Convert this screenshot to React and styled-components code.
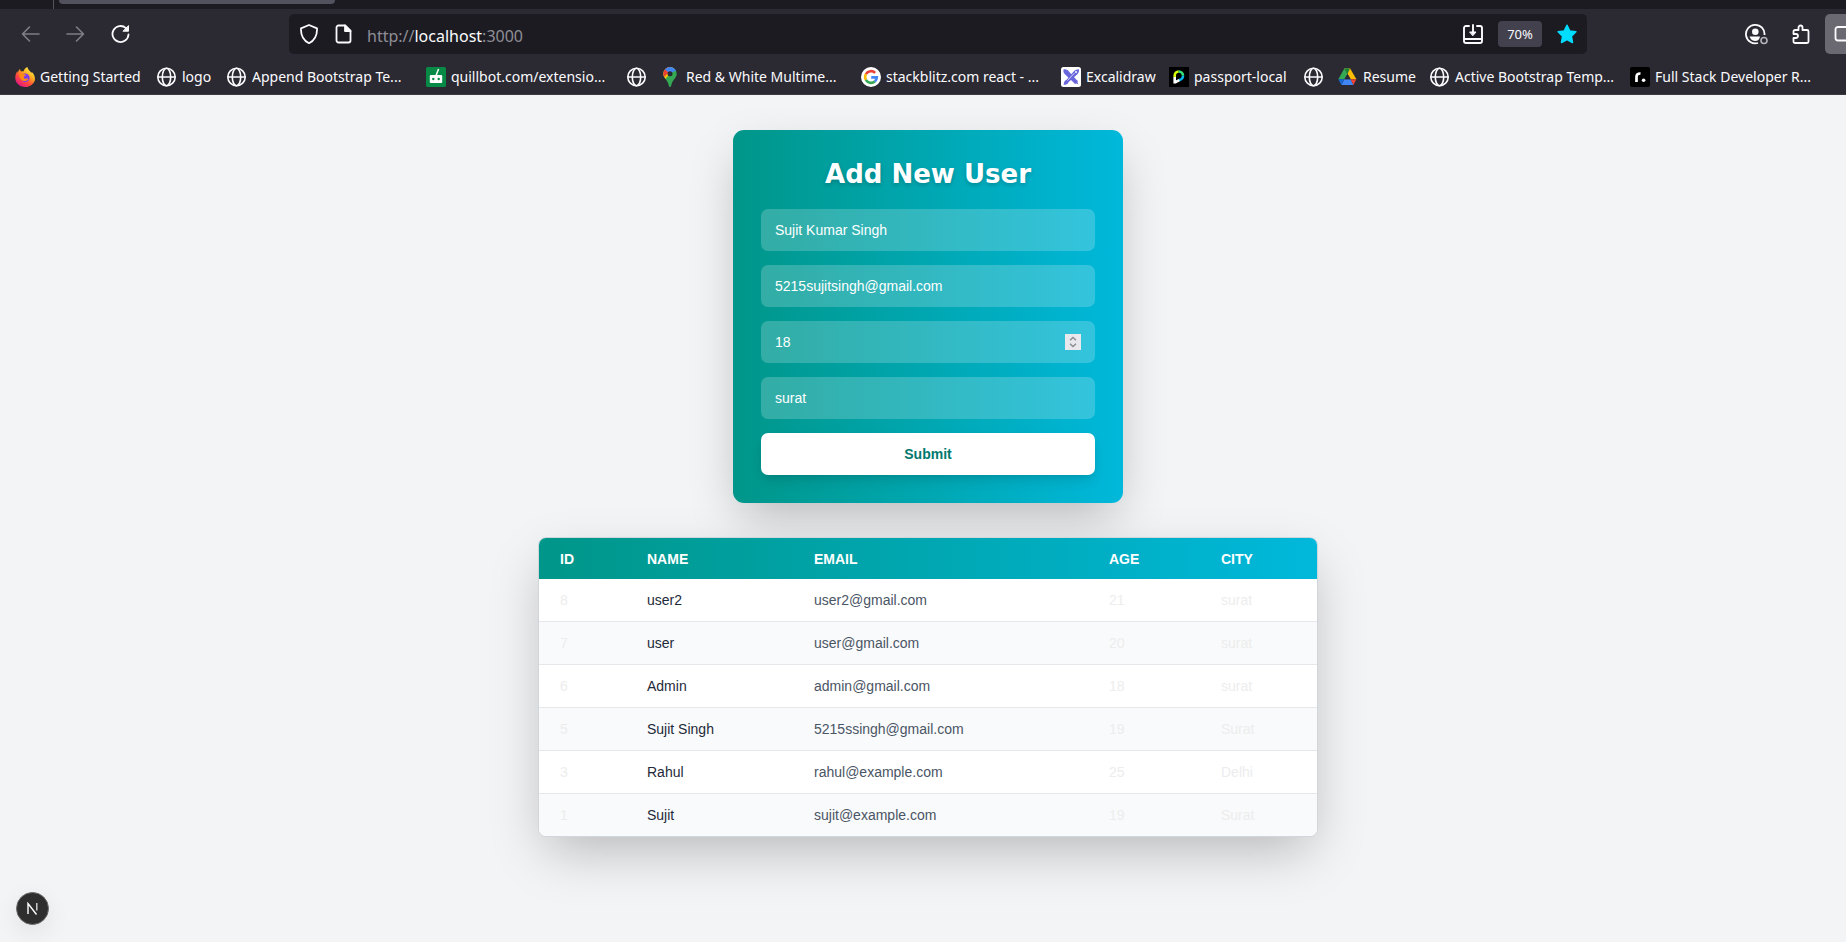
import React from "react";
import styled, { createGlobalStyle, css } from "styled-components";

const GlobalStyle = createGlobalStyle`
  *, *::before, *::after { box-sizing: border-box; }
  body {
    margin: 0;
    background: #f3f4f6;
    font-family: "Liberation Sans", Arial, Helvetica, sans-serif;
    overflow-x: hidden;
  }
  button, input { font: inherit; }
`;

const uiFont = css`
  font-family: "Segoe UI", "Noto Sans", "Open Sans", sans-serif;
`;

const Shell = styled.div`
  min-height: 100vh;
  display: flex;
  flex-direction: column;
`;

/* ---------- browser chrome ---------- */

const Chrome = styled.header`
  ${uiFont}
  background: #2b2a33;
  color: #fbfbfe;
  border-bottom: 1px solid #3b3a42;
  overflow: hidden;
`;

const TabStrip = styled.div`
  display: flex;
  align-items: flex-start;
  height: 9px;
  background: #1c1b22;
`;

const StripStart = styled.div`
  width: 54px;
  height: 9px;
  margin-right: 5px;
  border-right: 1px solid #55545e;
`;

const ActiveTab = styled.div`
  width: 276px;
  height: 4px;
  background: #52525e;
  border-radius: 0 0 4px 4px;
`;

const NavBar = styled.div`
  display: flex;
  align-items: center;
  height: 50px;
  padding-left: 8px;
`;

const NavGroup = styled.div`
  display: flex;
  align-items: center;
`;

const NavButton = styled.button`
  display: flex;
  align-items: center;
  justify-content: center;
  width: 45px;
  height: 40px;
  padding: 0;
  border: 0;
  background: none;
  color: ${(p) => (p.disabled ? "#7f7e86" : "#fbfbfe")};
`;

const EdgeButton = styled(NavButton)`
  justify-content: flex-start;
  width: 21px;
  margin-left: 2px;
  padding-left: 9px;
  border-radius: 5px 0 0 5px;
  background: #6a6972;
`;

const AddressBar = styled.div`
  flex: 1;
  min-width: 0;
  display: flex;
  align-items: center;
  height: 40px;
  margin: 0 146px;
  padding: 0 10px;
  border-radius: 5px;
  background: #1c1b22;
`;

const AddressText = styled.div`
  flex: 1;
  min-width: 0;
  margin-left: 13px;
  padding-top: 3px;
  font-size: 16px;
  line-height: 24px;
  white-space: nowrap;
  overflow: hidden;
  color: #8f8e96;
`;

const Host = styled.span`
  color: #fbfbfe;
`;

const BarIcon = styled.button`
  display: flex;
  align-items: center;
  justify-content: center;
  width: 20px;
  height: 24px;
  padding: 0;
  border: 0;
  background: none;
  color: #fbfbfe;
`;

const PageInfo = styled(BarIcon)`
  margin-left: 15px;
`;

const ZoomLevel = styled.button`
  width: 44px;
  height: 26px;
  margin: 0 15px;
  padding: 0;
  border: 0;
  border-radius: 4px;
  background: #42414d;
  color: #fbfbfe;
  font-size: 13px;
  line-height: 26px;
`;

const Bookmarks = styled.nav`
  display: flex;
  align-items: center;
  height: 35px;
  padding: 1px 0 0 15px;
`;

const Bookmark = styled.a`
  flex: none;
  display: flex;
  align-items: center;
  gap: 5px;
  width: ${(p) => p.$width}px;
  font-size: 14px;
  line-height: 20px;
  color: #fbfbfe;
  text-decoration: none;
  white-space: nowrap;
`;

/* ---------- page ---------- */

const brandGradient = css`
  background: linear-gradient(to right in oklab, #009689, #00b8db);
`;

const liftedShadow = css`
  box-shadow: 0 20px 50px -8px rgba(0, 0, 0, 0.25);
`;

const Main = styled.main`
  flex: 1;
  display: flex;
  flex-direction: column;
  align-items: center;
  gap: 34px;
  padding: 35px 0 35px 10px;
`;

const UserForm = styled.form`
  ${brandGradient}
  ${liftedShadow}
  display: flex;
  flex-direction: column;
  gap: 14px;
  width: 100%;
  max-width: 390px;
  padding: 28px;
  border-radius: 11px;
`;

const Title = styled.h1`
  margin: 0 0 4px;
  font-family: "Arial Black", "DejaVu Sans", sans-serif;
  font-size: 26px;
  font-weight: 900;
  line-height: 33px;
  text-align: center;
  color: #fff;
  text-shadow: 0 2px 4px rgba(0, 0, 0, 0.2);
`;

const Field = styled.div`
  display: flex;
  align-items: center;
  height: 42px;
  padding: 0 14px;
  border-radius: 7px;
  background: rgba(255, 255, 255, 0.2);
`;

const FieldInput = styled.input`
  flex: 1;
  min-width: 0;
  height: 42px;
  padding: 0;
  border: 0;
  outline: 0;
  background: none;
  color: #fff;
  font-size: 14px;
  appearance: textfield;
  &::-webkit-inner-spin-button { appearance: none; margin: 0; }
`;

const Stepper = styled.button`
  display: flex;
  width: 16px;
  height: 16px;
  padding: 0;
  border: 0;
  background: #e9e9ed;
  color: #8b8b94;
`;

const Submit = styled.button`
  height: 42px;
  border: 0;
  border-radius: 7px;
  background: #fff;
  color: #00786f;
  font-size: 14px;
  font-weight: 700;
  box-shadow: 0 7px 14px -2px rgba(0, 0, 0, 0.12), 0 3px 6px -3px rgba(0, 0, 0, 0.1);
`;

const TableCard = styled.div`
  ${liftedShadow}
  width: 100%;
  max-width: 780px;
  overflow: hidden;
  border: 1px solid #d1d5dc;
  border-radius: 8px;
  background: #fff;
`;

const UserTable = styled.table`
  width: 100%;
  border-collapse: separate;
  border-spacing: 0;
  table-layout: fixed;
  font-size: 14px;
  line-height: 20px;
  text-align: left;
`;

const HeadRow = styled.tr`
  ${brandGradient}
  height: 41px;
`;

const HeadCell = styled.th`
  width: ${(p) => p.$width};
  padding: 0 21px;
  font-weight: 700;
  text-transform: uppercase;
  color: #fff;
`;

const Cell = styled.td`
  height: 43px;
  padding: 0 21px;
  border-bottom: 1px solid #e5e7eb;
  color: ${(p) => p.$color || "#ededed"};
`;

const Row = styled.tr`
  &:nth-child(even) { background: #f9fafb; }
  &:last-child ${Cell} { height: 42px; border-bottom: 0; }
`;

const DevBadge = styled.button`
  position: fixed;
  left: 16px;
  bottom: 17px;
  display: flex;
  align-items: center;
  justify-content: center;
  width: 33px;
  height: 33px;
  padding: 0;
  border: 1px solid #6b6b6b;
  border-radius: 50%;
  background: #2e2e2e;
  box-shadow: 0 8px 24px rgba(0, 0, 0, 0.08);
`;

/* ---------- icons ---------- */

const Line = ({ size = 20, width = 1.6, children }) => (
  <svg width={size} height={size} viewBox="0 0 20 20" fill="none" stroke="currentColor" strokeWidth={width} strokeLinecap="round" strokeLinejoin="round" aria-hidden="true">
    {children}
  </svg>
);

const Globe = () => (
  <Line>
    <circle cx="9.500" cy="10" r="8.700" />
    <ellipse cx="9.500" cy="10" rx="4.200" ry="8.700" />
    <path d="M1 10h17" />
  </Line>
);

const Firefox = () => (
  <svg width="20" height="20" viewBox="0 0 20 20" aria-hidden="true">
    <defs>
      <linearGradient id="fxBody" x1="0.85" y1="0.05" x2="0.2" y2="0.95">
        <stop offset="0" stopColor="#fff44f" />
        <stop offset="0.35" stopColor="#ffb01f" />
        <stop offset="0.65" stopColor="#ff4b3a" />
        <stop offset="1" stopColor="#e31587" />
      </linearGradient>
    </defs>
    <path fill="url(#fxBody)" d="M12.4 0c.3 2 1.300 2.800 2.600 4.200.6.600 1.200 1.300 1.500 1.900.2-.4.200-.9.100-1.300 2.100 2 3.400 4.500 3.400 7.100C19.600 16.500 15.300 20 10.100 20 4.500 20 .3 16 .3 10.800c0-2.500.7-4.800 2-6.600.1.700.3 1.200.6 1.600.2-1.500 1-2.900 2.200-3.800 0 1 .2 1.800.8 2.400.9-.2 1.800-.1 2.600.2C8.800 2.800 10.300.9 12.400 0z" />
    <circle cx="10.300" cy="10.800" r="4.300" fill="#7a3cf0" />
    <path fill="#ff8a16" d="M4.200 7.300c1.600-1.200 3.600-1 5 .1 1 .1 1.800.2 2 .6-.3.800-1.500 1-2.200 1.400-.3.800-.2 1.600.7 2.100 1.300.7 2.600-.3 3.600.2-.7 1.900-2.600 2.700-4.500 2.300-2.600-.6-4.700-3-4.600-6.700z" />
  </svg>
);

const Quillbot = () => (
  <svg width="20" height="20" viewBox="0 0 20 20" aria-hidden="true">
    <rect width="20" height="20" rx="1.500" fill="#078a46" />
    <path d="M10 8.500 12.600 2" stroke="#fff" strokeWidth="1.500" />
    <rect x="3.800" y="8" width="12.400" height="8" rx="1" fill="#fff" />
    <circle cx="7.300" cy="12" r="1.200" fill="#078a46" />
    <circle cx="12.700" cy="12" r="1.200" fill="#078a46" />
  </svg>
);

const MapPin = () => (
  <svg width="20" height="20" viewBox="0 0 20 20" aria-hidden="true">
    <defs>
      <clipPath id="pinShape">
        <path d="M9 0a6.700 6.700 0 0 1 6.700 6.700c0 3.500-2.800 5.300-4.300 8.200-.9 1.700-1.200 5.100-2.400 5.100s-1.500-3.400-2.400-5.100C5.100 12 2.300 10.200 2.300 6.700A6.700 6.700 0 0 1 9 0z" />
      </clipPath>
    </defs>
    <g clipPath="url(#pinShape)">
      <rect width="20" height="20" fill="#34a853" />
      <path d="M0 17 14 1l-4-1H0z" fill="#fbbc04" />
      <path d="M0 10.500 3.500 9.500 9 4V0H0z" fill="#ea4335" />
      <path d="M4 2.400 8.500 6 16 3.500V0H5z" fill="#4285f4" />
    </g>
    <circle cx="9" cy="6.700" r="2.500" fill="#2b2a33" />
  </svg>
);

const Google = () => (
  <svg width="20" height="20" viewBox="0 0 20 20" fill="none" strokeWidth="2.600" aria-hidden="true">
    <circle cx="10" cy="10" r="10" fill="#fff" />
    <path stroke="#ea4335" d="M14.200 5.900A5.900 5.900 0 0 0 4.900 7.100" />
    <path stroke="#fbbc05" d="M4.900 7.100a5.900 5.900 0 0 0 0 5.800" />
    <path stroke="#34a853" d="M4.900 12.900a5.900 5.900 0 0 0 8.900 1.600" />
    <path stroke="#4285f4" d="M13.800 14.500a5.900 5.900 0 0 0 2-4.100H10.200" />
  </svg>
);

const Excalidraw = () => (
  <svg width="20" height="20" viewBox="0 0 20 20" aria-hidden="true">
    <rect width="20" height="20" rx="2.500" fill="#fff" />
    <g fill="#6965db">
      <path d="M2.500 2.500c2-.6 4 .2 5.600 2.200l7.600 8.200c1.200.6 1.300 1.500.8 2.600l1 2-2-1c-1 .6-2 .5-2.600-.8L4.700 8C2.800 6.400 2 4.500 2.500 2.500z" />
      <path d="M17.800 2.200c.6 2-.2 4.200-2.300 5.900L7.700 15c-.6 2-2.800 2.800-5 2.800 0-2.200.8-4.300 2.800-5L12.200 5c1.500-2 3.500-2.900 5.600-2.800z" />
    </g>
    <circle cx="15" cy="4.900" r="1" fill="#fff" />
    <path d="m6.500 13.500 7-7.500" stroke="#fff" strokeWidth=".7" />
  </svg>
);

const Passport = () => (
  <svg width="20" height="20" viewBox="0 0 20 20" fill="none" strokeWidth="2.600" aria-hidden="true">
    <rect width="20" height="20" fill="#000" />
    <path stroke="#d6ff00" d="M5.700 10V8.500a4 4 0 0 1 4-4" />
    <path stroke="#34e27a" d="M9.700 4.500a4.300 4.300 0 0 1 4.300 4.300" />
    <path stroke="#00b9f1" d="M14 8.800a4.300 4.300 0 0 1-4 4.300" />
    <path stroke="#fff" d="M5.700 10v6.500M10.300 13.100 5.700 15.500" />
  </svg>
);

const Drive = () => (
  <svg width="20" height="20" viewBox="0 0 20 20" aria-hidden="true">
    <path fill="#fbbc04" d="M6.400 1.300h5.600l6.400 11h-5.700z" />
    <path fill="#34a853" d="M6.400 1.300 9.500 7 6.400 12.300H.3z" />
    <path fill="#188038" d="M6.400 1.300H12L9.500 7z" />
    <path fill="#4285f4" d="M3.400 18 6.400 12.300h6.200L15.400 18z" />
    <path fill="#1967d2" d="M.3 12.300h6.100L3.400 18z" />
    <path fill="#ea4335" d="M12.600 12.300h5.800L15.400 18z" />
    <path fill="#2b2a33" d="m9.500 7 3.100 5.300H6.400z" />
  </svg>
);

const Roadmap = () => (
  <svg width="20" height="20" viewBox="0 0 20 20" aria-hidden="true">
    <rect width="20" height="20" rx="2" fill="#000" />
    <path d="M6.500 15V10c0-2.300 1.300-3.600 4-3.500" fill="none" stroke="#fff" strokeWidth="2.700" />
    <circle cx="13.600" cy="13.200" r="1.800" fill="#fff" />
  </svg>
);

const bookmarks = [
  { icon: Firefox, label: "Getting Started", width: 142 },
  { icon: Globe, label: "logo", width: 70 },
  { icon: Globe, label: "Append Bootstrap Te...", width: 199 },
  { icon: Quillbot, label: "quillbot.com/extensio...", width: 201 },
  { icon: Globe, label: "", width: 34 },
  { icon: MapPin, label: "Red & White Multime...", width: 200 },
  { icon: Google, label: "stackblitz.com react - ...", width: 200 },
  { icon: Excalidraw, label: "Excalidraw", width: 108 },
  { icon: Passport, label: "passport-local", width: 135 },
  { icon: Globe, label: "", width: 34 },
  { icon: Drive, label: "Resume", width: 92 },
  { icon: Globe, label: "Active Bootstrap Temp...", width: 200 },
  { icon: Roadmap, label: "Full Stack Developer R...", width: 190 },
];

const columns = [
  { label: "ID", width: "87px" },
  { label: "Name", width: "167px" },
  { label: "Email", width: "auto" },
  { label: "Age", width: "112px" },
  { label: "City", width: "117px" },
];

const users = [
  { id: 8, name: "user2", email: "user2@gmail.com", age: 21, city: "surat" },
  { id: 7, name: "user", email: "user@gmail.com", age: 20, city: "surat" },
  { id: 6, name: "Admin", email: "admin@gmail.com", age: 18, city: "surat" },
  { id: 5, name: "Sujit Singh", email: "5215ssingh@gmail.com", age: 19, city: "Surat" },
  { id: 3, name: "Rahul", email: "rahul@example.com", age: 25, city: "Delhi" },
  { id: 1, name: "Sujit", email: "sujit@example.com", age: 19, city: "Surat" },
];

function BrowserChrome() {
  return (
    <Chrome>
      <TabStrip>
        <StripStart />
        <ActiveTab />
      </TabStrip>
      <NavBar>
        <NavGroup>
          <NavButton aria-label="Back" disabled>
            <Line><path d="M18 10H1.500M8.500 3l-7 7 7 7" /></Line>
          </NavButton>
          <NavButton aria-label="Forward" disabled>
            <Line><path d="M1 10h16.500M10.500 3l7 7-7 7" /></Line>
          </NavButton>
          <NavButton aria-label="Reload">
            <Line width={1.8}>
              <path d="M17.500 10.500A8 8 0 1 1 15 4.200l1.500 1.500" />
              <path d="M17.500 2v5.200h-5.200z" fill="currentColor" strokeWidth="1" />
            </Line>
          </NavButton>
        </NavGroup>
        <AddressBar>
          <BarIcon aria-label="Tracking protection">
            <Line width={1.8}><path d="M10 1 18 4.300C18.300 11 15.500 16.500 10 19.200 4.500 16.500 1.700 11 2 4.300z" /></Line>
          </BarIcon>
          <PageInfo aria-label="Site information">
            <Line width={1.8}>
              <path d="M4.500 1.500H11l5.500 5.500v9.500a2 2 0 0 1-2 2h-10a2 2 0 0 1-2-2v-13a2 2 0 0 1 2-2z" />
              <path d="M11 1.500V7h5.500z" fill="currentColor" />
            </Line>
          </PageInfo>
          <AddressText role="textbox" aria-label="Address">
            http://<Host>localhost</Host>:3000
          </AddressText>
          <BarIcon aria-label="Install page">
            <Line width={1.900}>
              <path d="M6 2H3a2 2 0 0 0-2 2v13a2 2 0 0 0 2 2h14a2 2 0 0 0 2-2V4a2 2 0 0 0-2-2h-3M1 15h18M10 1v8" />
              <path d="M7 8h6l-3 3.500z" fill="currentColor" strokeWidth="1" />
            </Line>
          </BarIcon>
          <ZoomLevel>70%</ZoomLevel>
          <BarIcon aria-label="Edit bookmark">
            <svg width="20" height="20" viewBox="0 0 20 20" aria-hidden="true">
              <path fill="#00ddff" stroke="#00ddff" strokeWidth="1.500" strokeLinejoin="round" d="m10 1.200 2.700 5.700 6.200.8-4.500 4.400 1.100 6.400L10 15.500l-5.500 3 1.100-6.400L1.100 7.700l6.200-.8z" />
            </svg>
          </BarIcon>
        </AddressBar>
        <NavGroup>
          <NavButton aria-label="Account">
            <svg width="24" height="22" viewBox="0 0 24 22" fill="none" stroke="currentColor" strokeWidth="1.800" aria-hidden="true">
              <path d="M20.500 12A9.300 9.300 0 1 0 14 20" />
              <circle cx="11.300" cy="8.800" r="3.300" fill="currentColor" stroke="none" />
              <path d="M5.500 13.500h10.500c-.5 3-2.200 4.500-4.700 4.500s-4.800-1.500-5.800-4.500z" fill="currentColor" stroke="none" />
              <circle cx="20" cy="17.500" r="3" stroke="#b5b4bb" strokeWidth="1.600" />
            </svg>
          </NavButton>
          <NavButton aria-label="Extensions">
            <Line width={1.800}>
              <path d="M4 6h3.500V3.500a2 2 0 0 1 4 0V6H16a1.500 1.500 0 0 1 1.500 1.500v10A1.500 1.500 0 0 1 16 19H4a1.500 1.500 0 0 1-1.500-1.500V14H5a2 2 0 0 0 0-4H2.500V7.500A1.500 1.500 0 0 1 4 6z" />
            </Line>
          </NavButton>
          <EdgeButton aria-label="Sidebar">
            <svg width="12" height="20" viewBox="0 0 12 20" fill="none" stroke="currentColor" strokeWidth="1.800" aria-hidden="true">
              <path d="M14 3H4a2.500 2.500 0 0 0-2.500 2.500v8.500a2.500 2.500 0 0 0 2.500 2.500h10" />
            </svg>
          </EdgeButton>
        </NavGroup>
      </NavBar>
      <Bookmarks aria-label="Bookmarks">
        {bookmarks.map(({ icon: Icon, label, width }, i) => (
          <Bookmark key={i} href="#" $width={width} aria-label={label || "Bookmark"}>
            <Icon />
            {label}
          </Bookmark>
        ))}
      </Bookmarks>
    </Chrome>
  );
}

export default function App() {
  return (
    <Shell>
      <GlobalStyle />
      <BrowserChrome />
      <Main>
        <UserForm onSubmit={(e) => e.preventDefault()}>
          <Title>Add New User</Title>
          <Field>
            <FieldInput aria-label="Name" type="text" defaultValue="Sujit Kumar Singh" />
          </Field>
          <Field>
            <FieldInput aria-label="Email" type="email" defaultValue="5215sujitsingh@gmail.com" />
          </Field>
          <Field>
            <FieldInput aria-label="Age" type="number" defaultValue="18" />
            <Stepper type="button" aria-label="Change age">
              <svg width="16" height="16" viewBox="0 0 16 16" fill="none" stroke="currentColor" strokeWidth="1.400" aria-hidden="true">
                <path d="M5 6.300 8 3.500l3 2.800M5 9.700l3 2.800 3-2.800" />
              </svg>
            </Stepper>
          </Field>
          <Field>
            <FieldInput aria-label="City" type="text" defaultValue="surat" />
          </Field>
          <Submit type="submit">Submit</Submit>
        </UserForm>
        <TableCard>
          <UserTable>
            <thead>
              <HeadRow>
                {columns.map((c) => (
                  <HeadCell key={c.label} $width={c.width} scope="col">{c.label}</HeadCell>
                ))}
              </HeadRow>
            </thead>
            <tbody>
              {users.map((u) => (
                <Row key={u.id}>
                  <Cell>{u.id}</Cell>
                  <Cell $color="#1e2939">{u.name}</Cell>
                  <Cell $color="#4a5565">{u.email}</Cell>
                  <Cell>{u.age}</Cell>
                  <Cell>{u.city}</Cell>
                </Row>
              ))}
            </tbody>
          </UserTable>
        </TableCard>
      </Main>
      <DevBadge aria-label="Open developer tools">
        <svg width="13" height="13" viewBox="0 0 13 13" fill="none" stroke="#fff" strokeWidth="1.400" aria-hidden="true">
          <path d="M2 12V1.500L10.500 12.500" />
          <path d="M10.800 1v7.500" opacity=".8" />
        </svg>
      </DevBadge>
    </Shell>
  );
}
